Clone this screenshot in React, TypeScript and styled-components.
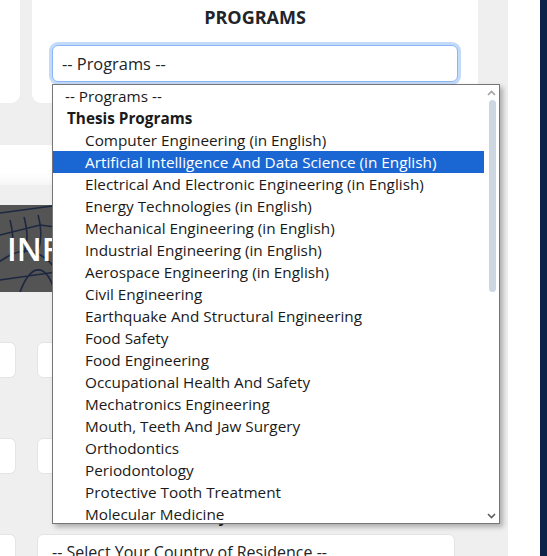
import React from "react";
import styled, { createGlobalStyle } from "styled-components";

const GlobalStyle = createGlobalStyle`
  html, body {
    margin: 0;
    padding: 0;
    background: #ffffff;
  }
  body {
    font-family: "Open Sans", "Noto Sans", sans-serif;
    color: #212529;
  }
`;

const thesisPrograms = [
  "Computer Engineering (in English)",
  "Artificial Intelligence And Data Science (in English)",
  "Electrical And Electronic Engineering (in English)",
  "Energy Technologies (in English)",
  "Mechanical Engineering (in English)",
  "Industrial Engineering (in English)",
  "Aerospace Engineering (in English)",
  "Civil Engineering",
  "Earthquake And Structural Engineering",
  "Food Safety",
  "Food Engineering",
  "Occupational Health And Safety",
  "Mechatronics Engineering",
  "Mouth, Teeth And Jaw Surgery",
  "Orthodontics",
  "Periodontology",
  "Protective Tooth Treatment",
  "Molecular Medicine",
];

const SELECTED = 1;

export default function App() {
  return (
    <>
      <GlobalStyle />
      <Page>
        <Main>
          <TopRow>
            <SideCard />
            <ProgramsCard>
              <Heading>PROGRAMS</Heading>
              <SelectBox>-- Programs --</SelectBox>
            </ProgramsCard>
          </TopRow>

          <TabBand />

          <Banner>
            <BannerArt viewBox="0 0 485 87" preserveAspectRatio="none">
              <path d="M0 8 L60 0 M0 30 L40 20 L70 24 M-5 60 C20 40 40 40 60 70 M20 87 C30 60 45 55 55 87 M0 75 L70 65" />
              <path d="M10 15 C14 30 14 40 10 50 M24 12 C28 28 28 36 24 48 M38 10 C42 24 42 34 38 46" />
              <path d="M120 0 L150 87 M200 10 L260 40 L320 15 M380 0 C400 40 440 50 485 30 M300 87 C310 60 340 60 350 87" />
            </BannerArt>
            <BannerTitle>INFORMATION FORM</BannerTitle>
          </Banner>

          <Form>
            <FieldBlock>
              <FieldLabel>Nationality</FieldLabel>
              <FieldRow>
                <Stub />
                <Field />
              </FieldRow>
            </FieldBlock>
            <FieldBlock>
              <FieldLabel>Identity Number</FieldLabel>
              <FieldRow>
                <Stub />
                <Field />
              </FieldRow>
            </FieldBlock>
            <FieldBlock>
              <FieldLabel>Country of Residence</FieldLabel>
              <FieldRow>
                <Stub />
                <Field>-- Select Your Country of Residence --</Field>
              </FieldRow>
            </FieldBlock>
          </Form>

          <Popup>
            <OptionList>
              <Option $indent={12}>-- Programs --</Option>
              <GroupLabel>Thesis Programs</GroupLabel>
              {thesisPrograms.map((name, i) => (
                <Option key={name} $indent={32} $active={i === SELECTED}>
                  {name}
                </Option>
              ))}
            </OptionList>
            <Scrollbar>
              <Arrow viewBox="0 0 9 6" $color="#a3a3a3">
                <path d="M1 5 L4.5 1.5 L8 5" />
              </Arrow>
              <Track>
                <Thumb />
              </Track>
              <Arrow viewBox="0 0 9 6" $color="#5f5f5f">
                <path d="M1 1 L4.5 4.5 L8 1" />
              </Arrow>
            </Scrollbar>
          </Popup>
        </Main>
        <Gutter />
        <NavyStrip />
      </Page>
    </>
  );
}

const Page = styled.div`
  display: flex;
  width: 547px;
  height: 556px;
  overflow: hidden;
`;

const Main = styled.div`
  position: relative;
  width: 508px;
  flex-shrink: 0;
  background: #efefef;
`;

const Gutter = styled.div`
  width: 32px;
  flex-shrink: 0;
  background: #ffffff;
`;

const NavyStrip = styled.div`
  flex: 1;
  background: #0b2349;
`;

const TopRow = styled.div`
  display: flex;
  gap: 12px;
  height: 103px;
`;

const SideCard = styled.div`
  width: 20px;
  background: #ffffff;
  border-radius: 0 0 9px 0;
`;

const ProgramsCard = styled.div`
  width: 446px;
  box-sizing: border-box;
  padding: 5px 20px 0;
  background: #ffffff;
  border-radius: 0 0 9px 9px;
`;

const Heading = styled.div`
  text-align: center;
  font-size: 18px;
  font-weight: 700;
  line-height: 24px;
  color: #212529;
`;

const SelectBox = styled.div`
  margin-top: 16px;
  height: 37px;
  box-sizing: border-box;
  padding: 0 9px;
  display: flex;
  align-items: center;
  font-size: 16.4px;
  color: #212529;
  background: #ffffff;
  border: 1px solid #8bb6f5;
  border-radius: 6px;
  box-shadow: 0 0 0 3px #c4daf9;
`;

const TabBand = styled.div`
  margin-top: 42px;
  width: 486px;
  height: 40px;
  background: linear-gradient(#ffffff 70%, #f6f6f6);
`;

const Banner = styled.div`
  position: relative;
  margin-top: 20px;
  width: 486px;
  height: 87px;
  background: #545454;
  overflow: hidden;
  display: flex;
  align-items: center;
`;

const BannerArt = styled.svg`
  position: absolute;
  inset: 0;
  width: 100%;
  height: 100%;
  fill: none;
  stroke: #1d2840;
  stroke-width: 1.6;
`;

const BannerTitle = styled.div`
  position: relative;
  padding-left: 7px;
  font-size: 32px;
  font-weight: 600;
  color: #ffffff;
  white-space: nowrap;
`;

const Form = styled.div`
  padding-top: 22px;
  display: flex;
  flex-direction: column;
  gap: 32px;
`;

const FieldBlock = styled.div`
  display: flex;
  flex-direction: column;
  gap: 7px;
`;

const FieldLabel = styled.div`
  padding: 1px 0 0 37px;
  width: 418px;
  text-align: center;
  font-size: 15px;
  font-weight: 700;
  line-height: 20px;
  color: #212529;
`;

const FieldRow = styled.div`
  display: grid;
  grid-template-columns: 16px 418px;
  gap: 21px;
`;

const Stub = styled.div`
  height: 36px;
  box-sizing: border-box;
  background: #ffffff;
  border: 1px solid #e4e4e4;
  border-left: none;
  border-radius: 0 6px 6px 0;
`;

const Field = styled.div`
  height: 36px;
  box-sizing: border-box;
  padding: 0 14px;
  display: flex;
  align-items: center;
  font-size: 16px;
  color: #212529;
  background: #ffffff;
  border: 1px solid #e4e4e4;
  border-radius: 6px;
  white-space: nowrap;
`;

const Popup = styled.div`
  position: absolute;
  left: 52px;
  top: 84px;
  width: 448px;
  height: 440px;
  box-sizing: border-box;
  display: flex;
  background: #ffffff;
  border: 1px solid #767676;
  box-shadow: 3px 3px 5px rgba(0, 0, 0, 0.28);
  font-family: "Open Sans", "Noto Sans", sans-serif;
`;

const OptionList = styled.div`
  width: 431px;
  display: flex;
  flex-direction: column;
`;

const Option = styled.div<{ $indent: number; $active?: boolean }>`
  height: 22px;
  flex-shrink: 0;
  padding-left: ${(p) => p.$indent}px;
  display: flex;
  align-items: center;
  font-size: 15.3px;
  line-height: 22px;
  white-space: nowrap;
  color: ${(p) => (p.$active ? "#ffffff" : "#1a1a1a")};
  background: ${(p) => (p.$active ? "#1a67d3" : "transparent")};
`;

const GroupLabel = styled(Option).attrs({ $indent: 14 })`
  font-weight: 700;
`;

const Scrollbar = styled.div`
  flex: 1;
  display: flex;
  flex-direction: column;
  align-items: center;
  padding: 5px 0 4px;
`;

const Arrow = styled.svg<{ $color: string }>`
  width: 9px;
  height: 6px;
  fill: none;
  stroke: ${(p) => p.$color};
  stroke-width: 1.6;
`;

const Track = styled.div`
  flex: 1;
  width: 7px;
  padding-top: 4px;
`;

const Thumb = styled.div`
  height: 192px;
  margin-left: 1px;
  width: 7px;
  border-radius: 4px;
  background: #cdd7e1;
`;
